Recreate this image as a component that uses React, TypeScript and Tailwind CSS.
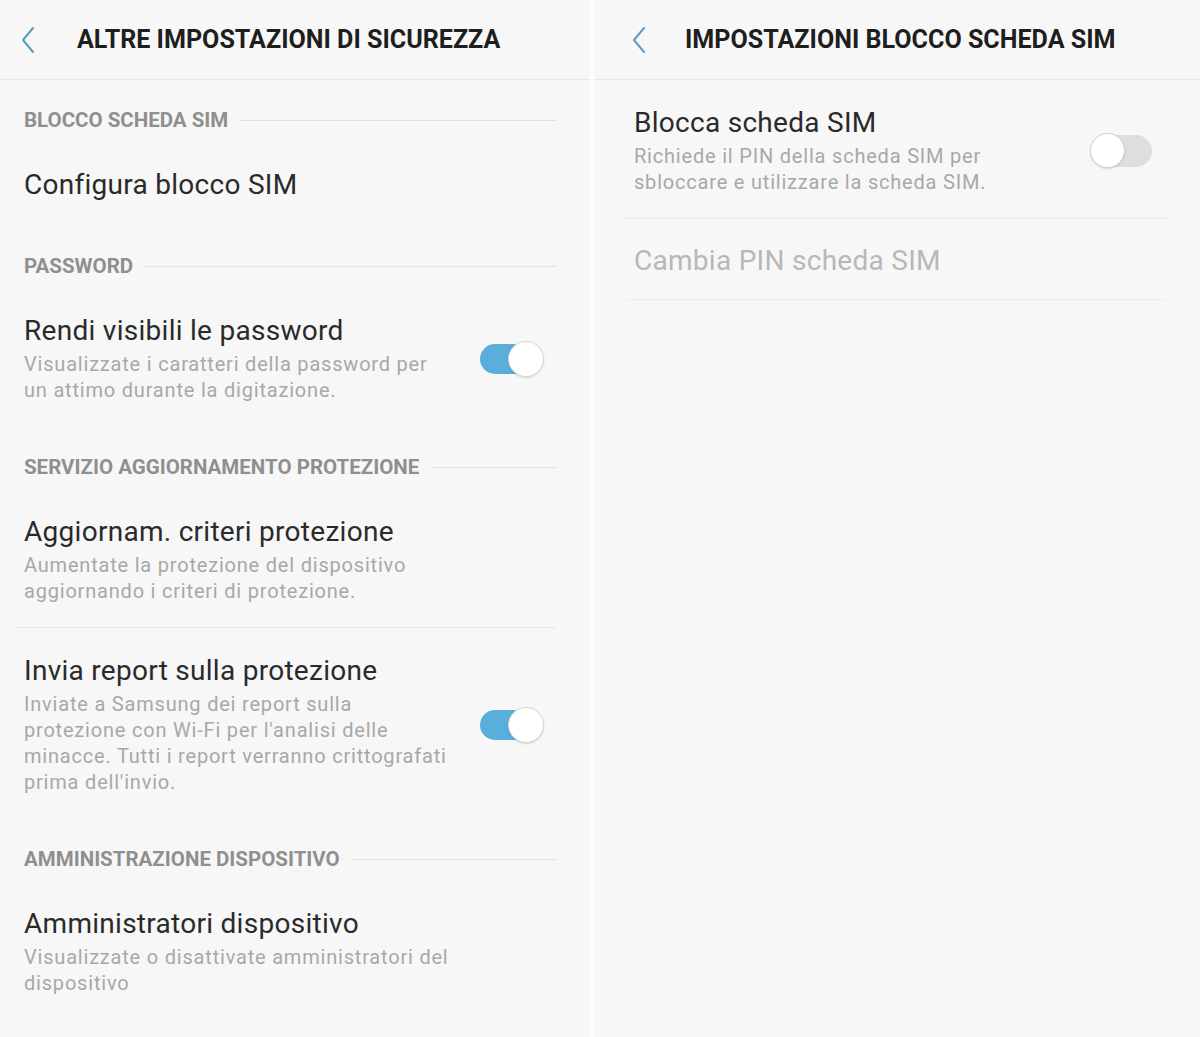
import type { ReactNode } from "react";

type Row = {
  title: string;
  lines?: string[];
  toggle?: "on" | "off";
  muted?: boolean;
};

const Chevron = () => (
  <svg width="16" height="28" viewBox="0 0 16 28" fill="none" className="shrink-0">
    <polyline
      points="13,2 3,14 13,26"
      stroke="#5b9dc2"
      strokeWidth="2"
      strokeLinecap="round"
      strokeLinejoin="round"
    />
  </svg>
);

const Toggle = ({ on }: { on: boolean }) =>
  on ? (
    <div className="relative h-[36px] w-[64px] shrink-0">
      <div className="absolute left-0 right-[2px] top-[3px] h-[30px] rounded-full bg-[#5aaedb]" />
      <div className="absolute right-0 top-0 h-[36px] w-[36px] rounded-full border border-[#d6d6d6] bg-white shadow-[0_1px_2px_rgba(0,0,0,0.12)]" />
    </div>
  ) : (
    <div className="relative h-[36px] w-[62px] shrink-0">
      <div className="absolute left-[2px] right-0 top-[2px] h-[32px] rounded-full bg-[#dedede]" />
      <div className="absolute left-0 top-0 h-[35px] w-[35px] rounded-full border border-[#d2d2d2] bg-white shadow-[0_1px_2px_rgba(0,0,0,0.12)]" />
    </div>
  );

const Header = ({ title, className }: { title: string; className: string }) => (
  <div className={`flex h-[80px] shrink-0 items-center border-b border-[#e6e6e6] ${className}`}>
    <Chevron />
    <h1 className="origin-left scale-x-[0.965] whitespace-nowrap text-[26px] font-bold text-[#1e1e1e]">
      {title}
    </h1>
  </div>
);

const Section = ({ label }: { label: string }) => (
  <div className="flex h-[44px] items-center gap-3 pl-[24px] pr-[34px]">
    <span className="whitespace-nowrap text-[20.5px] font-bold text-[#8f8f8f]">{label}</span>
    <div className="h-px flex-1 bg-[#e2e2e2]" />
  </div>
);

const Item = ({ row, className }: { row: Row; className: string }) => (
  <div className={`flex items-center justify-between ${className}`}>
    <div>
      <p
        className={`text-[28px] leading-[34px] tracking-[0.01em] ${row.muted ? "text-[#b8b8b8]" : "text-[#2a2a2a]"}`}
      >
        {row.title}
      </p>
      {row.lines ? (
        <div className="mt-[3px] text-[20px] leading-[26px] tracking-[0.04em] text-[#a8a8a8]">
          {row.lines.map((line) => (
            <p key={line}>{line}</p>
          ))}
        </div>
      ) : null}
    </div>
    {row.toggle ? <Toggle on={row.toggle === "on"} /> : null}
  </div>
);

const Panel = ({ children, className }: { children: ReactNode; className: string }) => (
  <div className={`flex flex-col bg-[#f7f7f7] ${className}`}>{children}</div>
);

export default function App() {
  return (
    <div className="flex h-[1037px] w-[1200px] overflow-hidden bg-[#fdfdfd] font-['Roboto',sans-serif]">
      <Panel className="w-[590px] shrink-0">
        <Header title="ALTRE IMPOSTAZIONI DI SICUREZZA" className="gap-[41px] pl-[20px]" />

        <div className="mt-[18px] shrink-0">
          <Section label="BLOCCO SCHEDA SIM" />
          <Item
            row={{ title: "Configura blocco SIM" }}
            className="pb-[42px] pl-[24px] pr-[46px] pt-[26px]"
          />

          <Section label="PASSWORD" />
          <Item
            row={{
              title: "Rendi visibili le password",
              lines: [
                "Visualizzate i caratteri della password per",
                "un attimo durante la digitazione.",
              ],
              toggle: "on",
            }}
            className="pb-[42px] pl-[24px] pr-[46px] pt-[26px]"
          />

          <Section label="SERVIZIO AGGIORNAMENTO PROTEZIONE" />
          <Item
            row={{
              title: "Aggiornam. criteri protezione",
              lines: [
                "Aumentate la protezione del dispositivo",
                "aggiornando i criteri di protezione.",
              ],
            }}
            className="pb-[23px] pl-[24px] pr-[46px] pt-[26px]"
          />
          <div className="ml-[16px] mr-[34px] h-px bg-[#e6e6e6]" />
          <Item
            row={{
              title: "Invia report sulla protezione",
              lines: [
                "Inviate a Samsung dei report sulla",
                "protezione con Wi-Fi per l'analisi delle",
                "minacce. Tutti i report verranno crittografati",
                "prima dell'invio.",
              ],
              toggle: "on",
            }}
            className="pb-[42px] pl-[24px] pr-[46px] pt-[26px]"
          />

          <Section label="AMMINISTRAZIONE DISPOSITIVO" />
          <Item
            row={{
              title: "Amministratori dispositivo",
              lines: [
                "Visualizzate o disattivate amministratori del",
                "dispositivo",
              ],
            }}
            className="pb-[42px] pl-[24px] pr-[46px] pt-[26px]"
          />
        </div>
      </Panel>

      <Panel className="ml-[4px] flex-1">
        <Header title="IMPOSTAZIONI BLOCCO SCHEDA SIM" className="gap-[38px] pl-[37px]" />
        <Item
          row={{
            title: "Blocca scheda SIM",
            lines: [
              "Richiede il PIN della scheda SIM per",
              "sbloccare e utilizzare la scheda SIM.",
            ],
            toggle: "off",
          }}
          className="pb-[23px] pl-[40px] pr-[48px] pt-[26px]"
        />
        <div className="ml-[32px] mr-[34px] h-px bg-[#e9e9e9]" />
        <Item
          row={{ title: "Cambia PIN scheda SIM", muted: true }}
          className="pb-[21px] pl-[40px] pr-[48px] pt-[25px]"
        />
        <div className="ml-[32px] mr-[34px] h-px bg-[#ececec]" />
      </Panel>
    </div>
  );
}
